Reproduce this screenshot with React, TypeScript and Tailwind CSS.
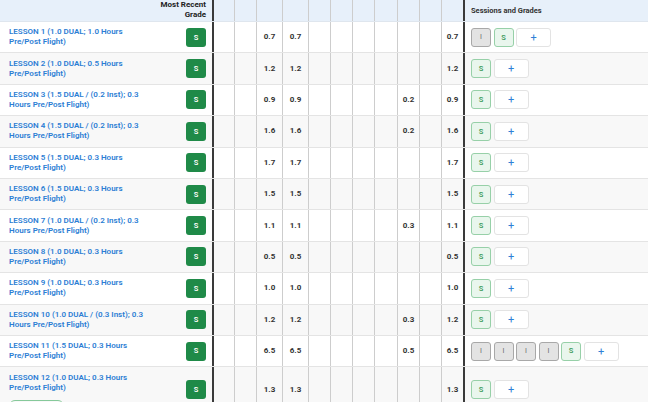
import React from "react";

type Row = {
  title: string;
  vals: Record<number, string>;
  sessions: ("I" | "S")[];
  stage?: boolean;
};

const rows: Row[] = [
  { title: "LESSON 1 (1.0 DUAL; 1.0 Hours Pre/Post Flight)", vals: { 2: "0.7", 3: "0.7", 10: "0.7" }, sessions: ["I", "S"] },
  { title: "LESSON 2 (1.0 DUAL; 0.5 Hours Pre/Post Flight)", vals: { 2: "1.2", 3: "1.2", 10: "1.2" }, sessions: ["S"] },
  { title: "LESSON 3 (1.5 DUAL / (0.2 Inst); 0.3 Hours Pre/Post Flight)", vals: { 2: "0.9", 3: "0.9", 8: "0.2", 10: "0.9" }, sessions: ["S"] },
  { title: "LESSON 4 (1.5 DUAL / (0.2 Inst); 0.3 Hours Pre/Post Flight)", vals: { 2: "1.6", 3: "1.6", 8: "0.2", 10: "1.6" }, sessions: ["S"] },
  { title: "LESSON 5 (1.5 DUAL; 0.3 Hours Pre/Post Flight)", vals: { 2: "1.7", 3: "1.7", 10: "1.7" }, sessions: ["S"] },
  { title: "LESSON 6 (1.5 DUAL; 0.3 Hours Pre/Post Flight)", vals: { 2: "1.5", 3: "1.5", 10: "1.5" }, sessions: ["S"] },
  { title: "LESSON 7 (1.0 DUAL / (0.2 Inst); 0.3 Hours Pre/Post Flight)", vals: { 2: "1.1", 3: "1.1", 8: "0.3", 10: "1.1" }, sessions: ["S"] },
  { title: "LESSON 8 (1.0 DUAL; 0.3 Hours Pre/Post Flight)", vals: { 2: "0.5", 3: "0.5", 10: "0.5" }, sessions: ["S"] },
  { title: "LESSON 9 (1.0 DUAL; 0.3 Hours Pre/Post Flight)", vals: { 2: "1.0", 3: "1.0", 10: "1.0" }, sessions: ["S"] },
  { title: "LESSON 10 (1.0 DUAL / (0.3 Inst); 0.3 Hours Pre/Post Flight)", vals: { 2: "1.2", 3: "1.2", 8: "0.3", 10: "1.2" }, sessions: ["S"] },
  { title: "LESSON 11 (1.5 DUAL; 0.3 Hours Pre/Post Flight)", vals: { 2: "6.5", 3: "6.5", 8: "0.5", 10: "6.5" }, sessions: ["I", "I", "I", "I", "S"] },
  { title: "LESSON 12 (1.0 DUAL; 0.3 Hours Pre/Post Flight)", vals: { 2: "1.3", 3: "1.3", 10: "1.3" }, sessions: ["S"], stage: true },
];

const colW = [
  "w-[22px]", "w-[22px]", "w-[26px]", "w-[26px]", "w-[22px]", "w-[22px]",
  "w-[22px]", "w-[23px]", "w-[22px]", "w-[22px]", "w-[22px]",
];

function NumCells({ vals }: { vals?: Record<number, string> }) {
  return (
    <>
      {colW.map((w, i) => (
        <div
          key={i}
          className={`${w} shrink-0 flex items-center justify-center ${
            i === 0 ? "border-l-2 border-l-[#3a3a3a]" : "border-l border-l-[#cdcdcd]"
          } text-[8px] font-bold text-[#333]`}
        >
          {vals ? vals[i] ?? "" : ""}
        </div>
      ))}
    </>
  );
}

function SessionBtn({ kind }: { kind: "I" | "S" }) {
  if (kind === "I")
    return (
      <div className="w-[20px] h-[19px] rounded-[3px] border border-[#a8a8a8] bg-[#e3e3e3] flex items-center justify-center text-[7px] text-[#6a6a6a]">
        I
      </div>
    );
  return (
    <div className="w-[20px] h-[19px] rounded-[3px] border border-[#97d0a8] bg-[#e9f6ed] flex items-center justify-center text-[7.5px] font-semibold text-[#3f9c5e]">
      S
    </div>
  );
}

export default function App() {
  return (
    <div
      className="w-[648px] h-[402px] overflow-hidden bg-white"
      style={{ fontFamily: "Roboto, 'Liberation Sans', sans-serif" }}
    >
      {/* header */}
      <div className="flex h-[22px] bg-[#e7f0fa] border-b border-b-[#dfe6ee]">
        <div className="w-[160px] shrink-0" />
        <div className="w-[52px] shrink-0 pr-[6px] text-right text-[8px] leading-[10px] font-bold text-[#222] whitespace-nowrap">
          Most Recent
          <br />
          Grade
        </div>
        <NumCells />
        <div className="flex-1 border-l-2 border-l-[#3a3a3a] pl-[6px] flex items-center text-[7.5px] font-bold text-[#333]">
          Sessions and Grades
        </div>
      </div>
      {rows.map((r, idx) => (
        <div
          key={idx}
          className={`flex ${r.stage ? "h-[46px]" : "h-[31.4px]"} border-b border-b-[#e4e4e4] ${
            idx % 2 === 1 ? "bg-[#f8f8f8]" : "bg-white"
          }`}
        >
          <div className={`w-[160px] shrink-0 pl-[9px] flex flex-col ${r.stage ? "justify-start pt-[6px]" : "justify-center"}`}>
            <div className="w-[140px] text-[8px] leading-[10px] font-semibold text-[#2b7dd4]">{r.title}</div>
            {r.stage && (
              <div className="mt-[7px] w-[55px] h-[12px] rounded-full border border-[#86c99a] text-[7px] leading-[10px] text-[#3f9c5e] text-center">
                Stage Check
              </div>
            )}
          </div>
          <div className="w-[52px] shrink-0 flex items-center justify-end pr-[6px]">
            <div className="w-[20px] h-[19px] rounded-[3px] bg-[#1f8a48] flex items-center justify-center text-[7.5px] font-semibold text-white">
              S
            </div>
          </div>
          <NumCells vals={r.vals} />
          <div className="flex-1 border-l-2 border-l-[#3a3a3a] pl-[6px] flex items-center gap-[2.5px]">
            {r.sessions.map((s, i) => (
              <SessionBtn key={i} kind={s} />
            ))}
            <div className="w-[35px] h-[19px] rounded-[3px] border border-[#e3e3e3] bg-white flex items-center justify-center text-[11px] leading-none text-[#2f7fd6]">
              +
            </div>
          </div>
        </div>
      ))}
    </div>
  );
}
